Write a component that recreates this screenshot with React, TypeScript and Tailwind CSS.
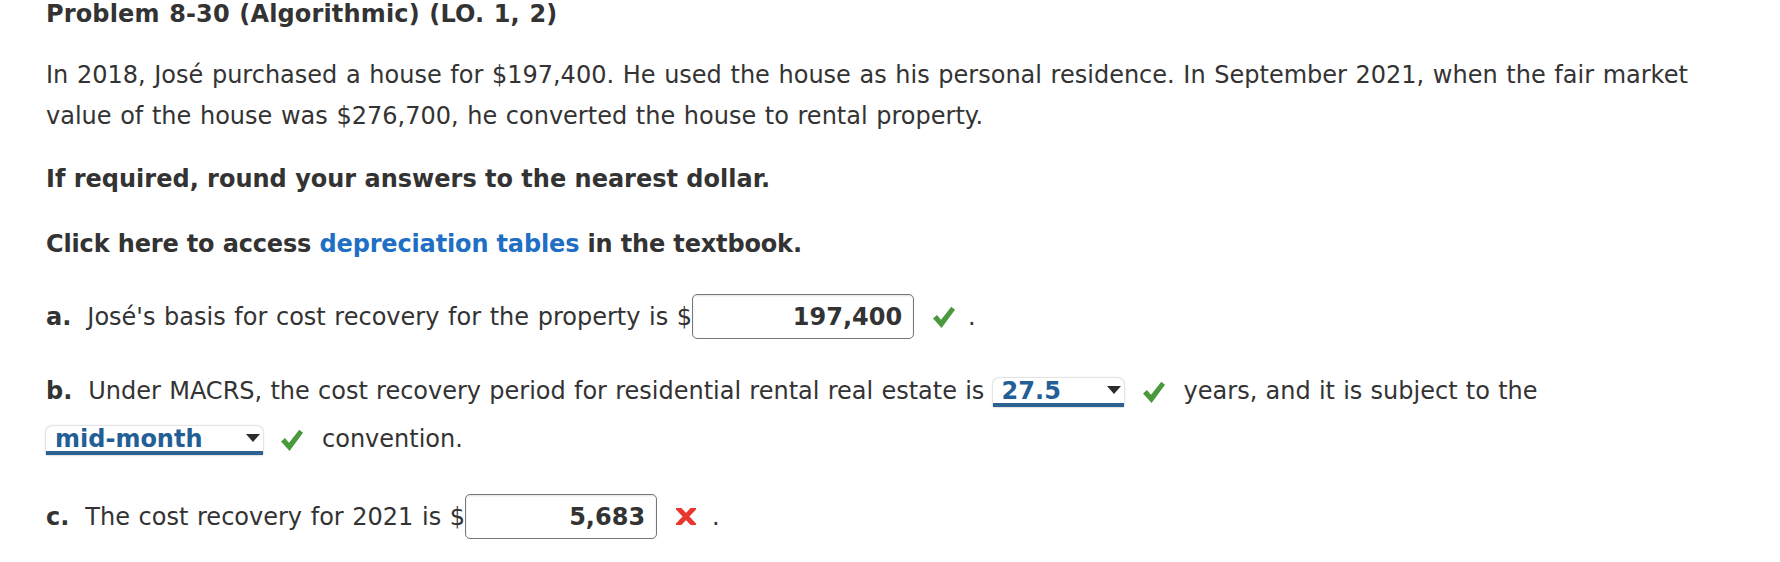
export default function App() {
  return (
    <div className="min-h-screen bg-white text-[#333333] font-['DejaVu_Sans',Verdana,sans-serif] text-[24px] [word-spacing:1px]">
      <div className="w-[1726px] pl-[46px]">
        {/* Heading */}
        <h1 className="font-bold text-[24px] leading-[28px] tracking-[0.15px]">Problem 8-30 (Algorithmic) (LO. 1, 2)</h1>

        <p className="mt-[27px] leading-[41px]">
          In 2018, José purchased a house for $197,400. He used the house as his personal residence. In September 2021, when the fair market value of the house was $276,700, he converted the house to rental property.
        </p>

        <p className="mt-[22px] leading-[41px] font-bold [word-spacing:0px]">If required, round your answers to the nearest dollar.</p>

        <p className="mt-[24px] leading-[41px] font-bold [word-spacing:0px] tracking-[-0.15px]">
          Click here to access <a className="text-[#1f6fc4] cursor-pointer">depreciation tables</a> in the textbook.
        </p>

        {/* Part a */}
        <div className="mt-[29px] flex items-center h-[45px]">
          <span className="font-bold">a.</span>
          <span className="ml-[16px]">José's basis for cost recovery for the property is $</span>
          <AnswerBox value="197,400" className="w-[222px]" />
          <Check className="ml-[19px]" />
          <span className="ml-[13px]">.</span>
        </div>

        {/* Part b */}
        <p className="mt-[28px] leading-[48px] [word-spacing:0.6px]">
          <span className="font-bold">b.</span>
          <span className="ml-[16px]">Under MACRS, the cost recovery period for residential rental real estate is </span>
          <Dropdown value="27.5" className="w-[131px]" />
          <Check className="ml-[19px] align-middle" />
          <span className="ml-[19px]">years, and it is subject to the</span>{" "}
          <Dropdown value="mid-month" className="w-[217px]" />
          <Check className="ml-[18px] align-middle" />
          <span className="ml-[19px]">convention.</span>
        </p>

        {/* Part c */}
        <div className="mt-[31px] flex items-center h-[45px]">
          <span className="font-bold">c.</span>
          <span className="ml-[16px]">The cost recovery for 2021 is $</span>
          <AnswerBox value="5,683" className="w-[192px]" />
          <Cross className="ml-[19px]" />
          <span className="ml-[16px]">.</span>
        </div>
      </div>
    </div>
  );
}

function AnswerBox({ value, className }: { value: string; className: string }) {
  return (
    <span
      className={`inline-flex items-center justify-end h-[45px] border-[1.5px] border-[#767676] rounded-[5px] bg-white pr-[11px] font-bold shadow-[inset_0_1px_2px_rgba(0,0,0,0.12)] ${className}`}
    >
      {value}
    </span>
  );
}

function Dropdown({ value, className }: { value: string; className: string }) {
  return (
    <span
      className={`inline-flex align-middle items-center justify-between h-[29px] bg-white rounded-t-[6px] border-b-[4px] border-[#2c6192] shadow-[0_0_2px_rgba(0,0,0,0.4)] pl-[9px] pr-[3px] font-bold text-[#235f96] leading-none ${className}`}
    >
      <span className="pt-[2px]">{value}</span>
      <svg width="14" height="8" viewBox="0 0 14 8">
        <polygon points="0,0 14,0 7,8" fill="#2b2b2b" />
      </svg>
    </span>
  );
}

function Check({ className }: { className?: string }) {
  return (
    <svg className={`inline-block shrink-0 ${className ?? ""}`} width="22" height="22" viewBox="0 0 22 22">
      <path d="M0 12.5 L4 9 L8 13.8 L18.3 0.8 L22 3.8 L8.6 22 Z" fill="#4a9a3d" />
    </svg>
  );
}

function Cross({ className }: { className?: string }) {
  return (
    <svg className={`inline-block shrink-0 ${className ?? ""}`} width="20" height="17" viewBox="0 0 20 17">
      <path d="M1 -1 L19 18 M19 -1 L1 18" stroke="#e8372c" strokeWidth="5" />
    </svg>
  );
}
